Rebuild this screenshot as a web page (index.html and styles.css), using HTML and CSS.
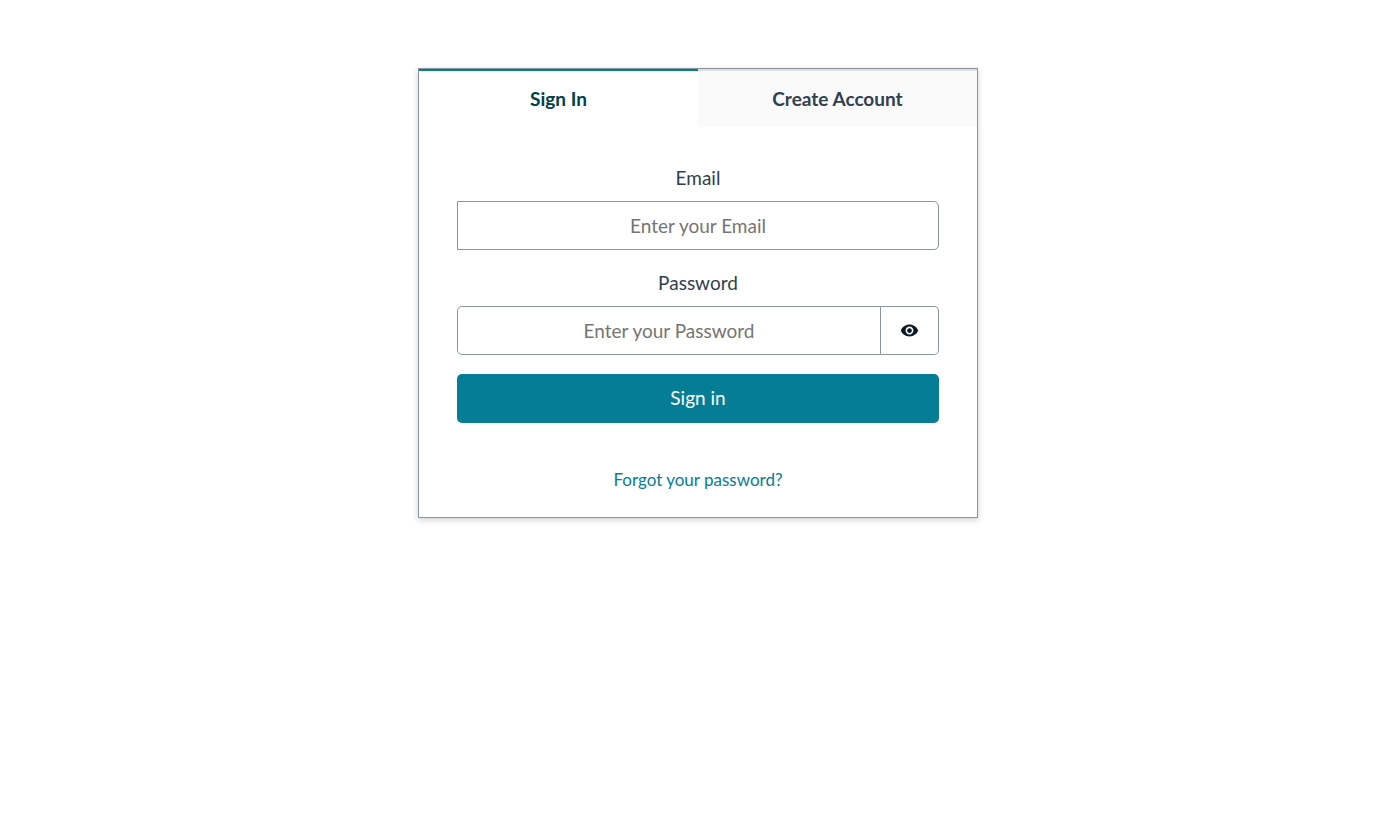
FILE: index.html
```html
<!DOCTYPE html>
<html lang="en">

<head>
    <meta charset="UTF-8">
    <meta name="viewport" content="width=device-width, initial-scale=1.0">
    <title>Sign In</title>
    <link rel="stylesheet" href="styles.css">
</head>
<body>
    <main class="card">
        <div class="tabs" role="tablist">
            <button class="tab active" type="button" role="tab" aria-selected="true">Sign In</button>
            <button class="tab" type="button" role="tab" aria-selected="false">Create Account</button>
        </div>
        <form class="form">
            <div class="field">
                <label for="email">Email</label>
                <input class="input email" id="email" type="email" placeholder="Enter your Email">
            </div>
            <div class="field">
                <label for="password">Password</label>
                <div class="group">
                    <input class="input password" id="password" type="password" placeholder="Enter your Password">
                    <button class="show" type="button" aria-label="Show password">
                        <svg width="19" height="19" viewBox="0 0 24 24" fill="currentColor">
                            <path d="M12 4.5C7 4.5 2.73 7.61 1 12c1.73 4.39 6 7.5 11 7.5s9.27-3.11 11-7.5c-1.73-4.39-6-7.5-11-7.5zM12 17c-2.76 0-5-2.24-5-5s2.24-5 5-5 5 2.24 5 5-2.24 5-5 5zm0-8c-1.66 0-3 1.34-3 3s1.34 3 3 3 3-1.34 3-3-1.34-3-3-3z"/>
                        </svg>
                    </button>
                </div>
            </div>
            <button class="submit" type="submit">Sign in</button>
        </form>
        <div class="footer">
            <a href="#">Forgot your password?</a>
        </div>
    </main>
</body>
</html>
```
FILE: styles.css
```css
* {
    box-sizing: border-box;
}
body {
    margin: 0;
    padding: 68px 4px 20px 0;
    background: #fff;
    color: #304050;
    font: 19px/27px Lato, "Liberation Sans", sans-serif;
}
button,
input {
    margin: 0;
    font: inherit;
}
button {
    cursor: pointer;
}
.card {
    margin: 0 auto;
    max-width: 560px;
    border: 1px solid #89949f;
    box-shadow: 0 2px 6px rgba(13, 26, 38, 0.2);
}
.tabs {
    display: flex;
}
.tab {
    flex: 1;
    height: 58px;
    padding: 0 0 2px;
    border: 0;
    border-top: 2px solid #dcdee0;
    background: #fafafa;
    color: #304050;
    font-weight: bold;
}
.tab.active {
    border-color: #047d95;
    background: #fff;
    color: #004049;
}
.form {
    display: flex;
    flex-direction: column;
    gap: 19px;
    padding: 37px 38px;
}
.field {
    display: flex;
    flex-direction: column;
    gap: 10px;
    text-align: center;
}
.input {
    width: 100%;
    height: 49px;
    padding: 0 16px;
    border: 1px solid #89949f;
    background: #fff;
    color: #304050;
    text-align: center;
}
.input::placeholder {
    color: #757575;
    opacity: 1;
}
.email {
    border-radius: 0 5px 5px 0;
}
.group {
    display: flex;
}
.password {
    flex: 1;
    min-width: 0;
    border-radius: 5px 0 0 5px;
}
.show {
    display: flex;
    align-items: center;
    justify-content: center;
    width: 58px;
    padding: 0;
    border: 1px solid #89949f;
    border-left: 0;
    border-radius: 0 5px 5px 0;
    background: #fff;
    color: #0d1a26;
}
.submit {
    height: 49px;
    padding: 0 0 2px;
    border: 0;
    border-radius: 5px;
    background: #047d95;
    color: #fff;
}
.footer {
    padding: 6px 38px 24px;
    text-align: center;
    font-size: 17px;
}
.footer a {
    color: #047d95;
    text-decoration: none;
}
```
